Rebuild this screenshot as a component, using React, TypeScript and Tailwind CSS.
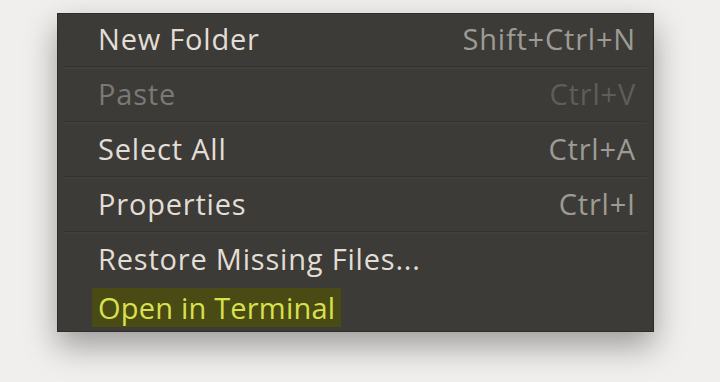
import React from "react";

type Item = { label: string; shortcut?: string; disabled?: boolean };

const items: Item[] = [
  { label: "New Folder", shortcut: "Shift+Ctrl+N" },
  { label: "Paste", shortcut: "Ctrl+V", disabled: true },
  { label: "Select All", shortcut: "Ctrl+A" },
  { label: "Properties", shortcut: "Ctrl+I" },
];

function Row({ item }: { item: Item }) {
  return (
    <div className="flex h-[52px] items-center justify-between pb-[4px] pl-[40px] pr-[17px]">
      <span className={item.disabled ? "text-[#7b7973]" : "text-[#e2ded6]"}>{item.label}</span>
      <span className={item.disabled ? "text-[#5f5d58]" : "text-[#9d9b95]"}>{item.shortcut}</span>
    </div>
  );
}

export default function App() {
  return (
    <div
      className="h-[382px] w-[720px] overflow-hidden bg-[#f0efed] pt-[13px] pl-[57px]"
      style={{ fontFamily: '"Open Sans", "Noto Sans", sans-serif' }}
    >
      <div className="w-[597px] border border-[#2e2d2a] bg-[#3c3b37] text-[29px] leading-none tracking-[0.8px] shadow-[0_14px_30px_rgba(0,0,0,0.35)]">
        {items.map((it) => (
          <div key={it.label}>
            <Row item={it} />
            <div className="mx-[6px] h-px bg-[#34332f]" />
            <div className="mx-[6px] h-[2px] bg-[#403f3b]" />
          </div>
        ))}
        <div className="flex h-[50px] items-center pb-[2px] pl-[40px] text-[#e2ded6]">Restore Missing Files...</div>
        <div className="flex h-[47px] items-center pl-[34px]">
          <span className="flex h-[39px] items-center bg-[#4a4a14] px-[6px] tracking-[0.2px] text-[#d8e04c]">
            Open in Terminal
          </span>
        </div>
      </div>
    </div>
  );
}
